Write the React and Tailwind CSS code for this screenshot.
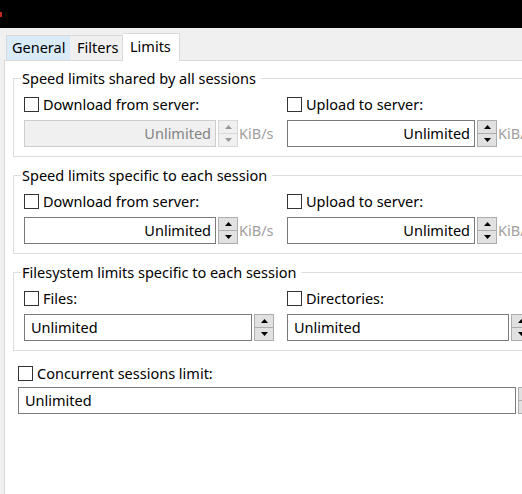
import React from 'react';

const FONT = { fontFamily: '"Noto Sans", "Open Sans", sans-serif' };

function Arrow({ up, disabled }) {
  return (
    <svg width="7" height="4" viewBox="0 0 7 4" className="block">
      <polygon
        points={up ? '0,4 7,4 3.5,0' : '0,0 7,0 3.5,4'}
        fill={disabled ? '#9a9a9a' : '#000'}
      />
    </svg>
  );
}

function Spin({ disabled }) {
  return (
    <div
      className={
        'ml-[2px] flex h-[27px] w-[20px] shrink-0 flex-col border ' +
        (disabled ? 'border-[#d9d9d9] bg-[#f0f0f0]' : 'border-[#adadad] bg-[#e1e1e1]')
      }
    >
      <div className="flex flex-1 items-center justify-center">
        <Arrow up disabled={disabled} />
      </div>
      <div
        className={
          'flex flex-1 items-center justify-center border-t ' +
          (disabled ? 'border-[#d9d9d9]' : 'border-[#adadad]')
        }
      >
        <Arrow disabled={disabled} />
      </div>
    </div>
  );
}

function Check({ label }) {
  return (
    <div className="flex h-[20px] items-center">
      <div className="h-[15px] w-[15px] shrink-0 border border-[#333] bg-white" />
      <span className="ml-[4px] leading-[20px]">{label}</span>
    </div>
  );
}

function NumberBox({ width, align = 'right', disabled, unit }) {
  return (
    <div className="flex items-center">
      <div
        className={
          'flex h-[27px] shrink-0 items-center border ' +
          (align === 'right' ? 'justify-end pr-[4px] ' : 'pl-[6px] ') +
          (disabled
            ? 'border-[#cccccc] bg-[#f0f0f0] text-[#838383]'
            : 'border-[#7a7a7a] bg-white text-black')
        }
        style={{ width }}
      >
        Unlimited
      </div>
      <Spin disabled={disabled} />
      {unit && <span className="ml-[1px] text-[#a0a0a0]">{unit}</span>}
    </div>
  );
}

function Group({ title, children }) {
  return (
    <fieldset className="w-[560px] border border-[#dcdcdc] px-[10px] pb-[9px] pt-[6px]">
      <legend className="ml-[-3px] pl-[1px] pr-[5px] leading-[20px]">{title}</legend>
      <div className="flex">{children}</div>
    </fieldset>
  );
}

function Column({ width, label, children }) {
  return (
    <div className="flex shrink-0 flex-col gap-[6px]" style={{ width }}>
      <Check label={label} />
      {children}
    </div>
  );
}

export default function App() {
  return (
    <div
      className="h-[494px] w-[522px] overflow-hidden bg-[#f0f0f0] text-[14.5px] text-black"
      style={FONT}
    >
      <div className="flex h-[28px] items-center bg-black">
        <div className="h-[5px] w-[2px] bg-[#c42b1c]" />
      </div>

      <div className="flex h-[32px] items-end pl-[6px]">
        <div className="flex h-[25px] w-[64px] items-center border-l border-t border-[#d9d9d9] bg-[#d9ebf9] pl-[5px]">
          General
        </div>
        <div className="flex h-[25px] w-[53px] items-center border-r border-t border-[#d9d9d9] pl-[7px]">
          Filters
        </div>
        <div className="relative z-10 -mb-px flex h-[28px] w-[57px] items-center border-r border-t border-[#d9d9d9] bg-white pb-[2px] pl-[7px]">
          Limits
        </div>
      </div>

      <div className="ml-[4px] flex h-[440px] w-[600px] flex-col gap-[8px] border-l border-t border-[#d9d9d9] bg-white pl-[8px] pt-[7px]">
        <Group title="Speed limits shared by all sessions">
          <Column width={263} label="Download from server:">
            <NumberBox width={192} disabled unit="KiB/s" />
          </Column>
          <Column width={263} label="Upload to server:">
            <NumberBox width={188} unit="KiB/s" />
          </Column>
        </Group>

        <Group title="Speed limits specific to each session">
          <Column width={263} label="Download from server:">
            <NumberBox width={192} unit="KiB/s" />
          </Column>
          <Column width={263} label="Upload to server:">
            <NumberBox width={188} unit="KiB/s" />
          </Column>
        </Group>

        <Group title="Filesystem limits specific to each session">
          <Column width={263} label="Files:">
            <NumberBox width={228} align="left" />
          </Column>
          <Column width={263} label="Directories:">
            <NumberBox width={222} align="left" />
          </Column>
        </Group>

        <div className="ml-[5px] mt-[4px] flex flex-col gap-[4px]">
          <Check label="Concurrent sessions limit:" />
          <NumberBox width={498} align="left" />
        </div>
      </div>
    </div>
  );
}
